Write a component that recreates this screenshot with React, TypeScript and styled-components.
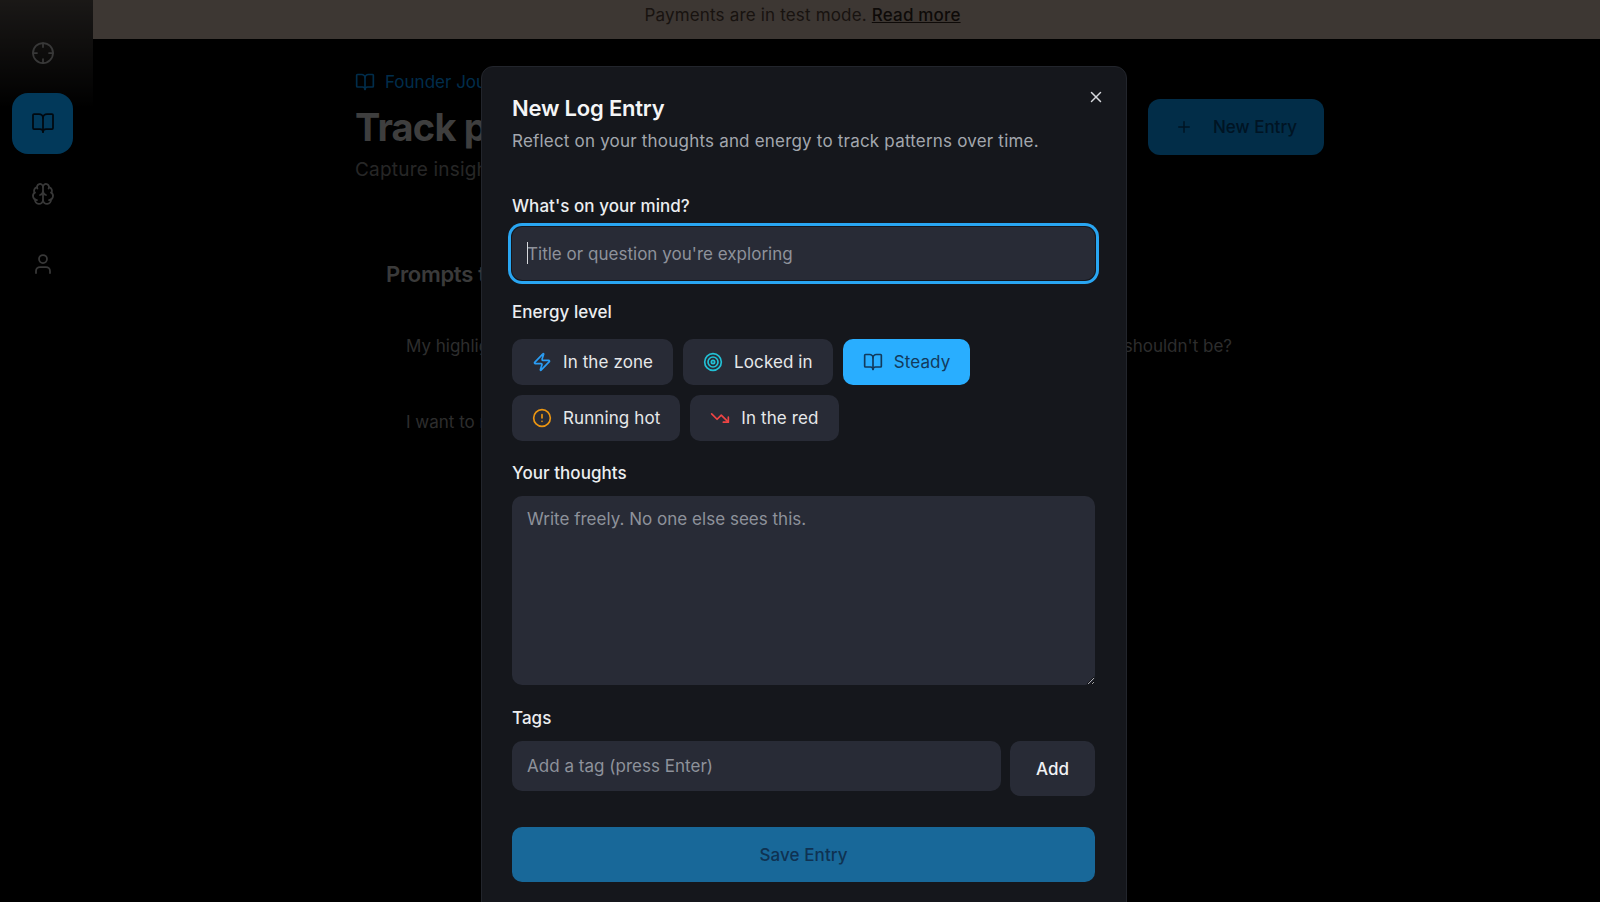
import styled, { createGlobalStyle } from "styled-components";
import {
  BookOpen,
  Brain,
  CircleAlert,
  Crosshair,
  Plus,
  Target,
  TrendingDown,
  User,
  X,
  Zap,
} from "lucide-react";

const font = `Inter, "Liberation Sans", sans-serif`;

const GlobalStyle = createGlobalStyle`
  html, body {
    margin: 0;
    height: 100%;
    background: #000;
    overflow: hidden;
    font-family: ${font};
  }
  * { box-sizing: border-box; }
`;

const Page = styled.div`
  display: flex;
  width: 1600px;
  height: 902px;
  background: #000;
  overflow: hidden;
`;
const Sidebar = styled.aside`
  width: 93px;
  flex: none;
  display: flex;
  flex-direction: column;
  padding: 22px 0 0 12px;
  gap: 9.5px;
  background: linear-gradient(#423d3a 0, #000 110px);
`;
const NavItem = styled.div<{ $active?: boolean }>`
  width: 61px;
  height: 61px;
  display: flex;
  align-items: center;
  justify-content: center;
  border-radius: 16px;
  color: ${(p) => (p.$active ? "#001526" : "#8c8c8c")};
  background: ${(p) => (p.$active ? "#058ee2" : "transparent")};
`;
const Main = styled.main`
  flex: 1;
  display: flex;
  flex-direction: column;
`;
const Banner = styled.div`
  height: 39px;
  flex: none;
  display: flex;
  align-items: center;
  justify-content: center;
  gap: 5px;
  padding: 0 88px 9px 0;
  background: #98897f;
  color: #3d3029;
  font-size: 17px;
  letter-spacing: 0.17px;
`;
const ReadMore = styled.a`
  color: #241a14;
  font-weight: 500;
  text-decoration: underline;
`;
const Content = styled.div`
  width: 969px;
  margin-left: 262px;
  padding-top: 33px;
`;
const Head = styled.header`
  display: flex;
  justify-content: space-between;
  align-items: flex-start;
`;
const Crumb = styled.div`
  display: flex;
  align-items: center;
  gap: 10px;
  color: #0070bc;
  font-size: 17px;
  line-height: 20px;
`;
const Title = styled.h1`
  margin: 12px 0 0;
  color: #9b9b9b;
  font-size: 38px;
  line-height: 46px;
  font-weight: 700;
  letter-spacing: -0.8px;
`;
const Sub = styled.p`
  margin: 7px 0 0;
  color: #606060;
  font-size: 19px;
  line-height: 26px;
  letter-spacing: 0.2px;
`;
const NewEntry = styled.button`
  width: 176px;
  height: 56px;
  margin-top: 27px;
  display: flex;
  align-items: center;
  justify-content: center;
  gap: 20px;
  border: 0;
  border-radius: 12px;
  background: #0570b4;
  color: #003258;
  font: 500 17px ${font};
`;
const Prompts = styled.section`
  margin-top: 76px;
  padding-left: 31px;
`;
const PromptsTitle = styled.h2`
  margin: 0;
  color: #919191;
  font-size: 22px;
  line-height: 30px;
  font-weight: 600;
  letter-spacing: -0.3px;
`;
const PromptGrid = styled.div`
  display: grid;
  grid-template-columns: 1fr auto;
  row-gap: 52px;
  margin-top: 45px;
  padding: 0 92px 0 20px;
  color: #717171;
  font-size: 17px;
  line-height: 24px;
`;
const Overlay = styled.div`
  position: fixed;
  inset: 0;
  background: rgba(0, 0, 0, 0.6);
`;
const Modal = styled.div`
  position: absolute;
  left: 481px;
  top: 66px;
  width: 646px;
  height: 860px;
  padding: 28px 31px 0 30px;
  border: 1px solid #22252c;
  border-radius: 12px;
  background: #15171c;
`;
const CloseButton = styled.button`
  position: absolute;
  top: 21px;
  right: 21px;
  padding: 0;
  display: flex;
  border: 0;
  background: none;
  color: #d6d8dc;
`;
const ModalTitle = styled.h2`
  margin: 0;
  color: #f4f5f6;
  font-size: 22px;
  line-height: 26px;
  font-weight: 600;
  letter-spacing: -0.2px;
`;
const ModalSub = styled.p`
  margin: 8px 0 0;
  color: #a3a7ae;
  font-size: 17px;
  line-height: 24px;
  letter-spacing: 0.2px;
`;
const Label = styled.label<{ $top: number }>`
  display: block;
  margin-top: ${(p) => p.$top}px;
  color: #eceef0;
  font-size: 17px;
  line-height: 22px;
  font-weight: 500;
  letter-spacing: 0.05px;
`;
const Field = styled.div`
  position: relative;
  margin-top: 10px;
`;
const Input = styled.input<{ $focused?: boolean }>`
  display: block;
  flex: 1;
  width: 100%;
  height: ${(p) => (p.$focused ? 53 : 50)}px;
  padding: 0 15px;
  border: 0;
  outline: 0;
  border-radius: 10px;
  background: #282b36;
  color: #eceef0;
  font: 400 17px ${font};
  letter-spacing: 0.02px;
  box-shadow: ${(p) =>
    p.$focused ? "0 0 0 1px #15171c, 0 0 0 4px #29a6f2" : "none"};
  &::placeholder {
    color: #8e929b;
    opacity: 1;
  }
`;
const Caret = styled.span`
  position: absolute;
  left: 15px;
  top: 15px;
  width: 1px;
  height: 22px;
  background: #d6d8dc;
`;
const Chips = styled.div`
  display: flex;
  flex-wrap: wrap;
  gap: 10px;
  width: 480px;
  margin-top: 16px;
`;
const Chip = styled.button<{ $active?: boolean }>`
  height: 46px;
  display: flex;
  align-items: center;
  gap: 11px;
  padding: 0 20px;
  border: 0;
  border-radius: 10px;
  background: ${(p) => (p.$active ? "#29aeff" : "#282b36")};
  color: ${(p) => (p.$active ? "#123a5c" : "#e6e8ea")};
  font: 400 17px ${font};
  letter-spacing: 0.1px;
`;
const TextArea = styled.textarea`
  display: block;
  width: 100%;
  height: 189px;
  margin-top: 12px;
  padding: 11px 15px;
  border: 0;
  outline: 0;
  border-radius: 10px;
  background: #282b36;
  color: #eceef0;
  resize: vertical;
  font: 400 17px/24px ${font};
  letter-spacing: 0.02px;
  &::placeholder {
    color: #8e929b;
    opacity: 1;
  }
`;
const TagRow = styled.div`
  display: flex;
  align-items: flex-start;
  gap: 9px;
  margin-top: 12px;
`;
const AddButton = styled.button`
  width: 85px;
  height: 55px;
  flex: none;
  border: 0;
  border-radius: 10px;
  background: #282b36;
  color: #f1f2f4;
  font: 500 17px ${font};
`;
const SaveButton = styled.button`
  display: block;
  width: 100%;
  height: 55px;
  margin-top: 31px;
  border: 0;
  border-radius: 10px;
  background: #186899;
  color: #0f3252;
  font: 500 17px ${font};
  letter-spacing: 0.1px;
`;

const navItems = [
  { id: "focus", icon: Crosshair },
  { id: "journal", icon: BookOpen, active: true },
  { id: "brain", icon: Brain },
  { id: "profile", icon: User },
];

const levels = [
  { label: "In the zone", icon: Zap, color: "#2a9df4" },
  { label: "Locked in", icon: Target, color: "#22c1d6" },
  { label: "Steady", icon: BookOpen, color: "#123a5c", active: true },
  { label: "Running hot", icon: CircleAlert, color: "#ec9612" },
  { label: "In the red", icon: TrendingDown, color: "#ef4444" },
];

const App = () => {
  return (
    <>
      <GlobalStyle />
      <Page>
        <Sidebar>
          {navItems.map((item) => (
            <NavItem key={item.id} $active={item.active}>
              <item.icon size={24} strokeWidth={1.75} />
            </NavItem>
          ))}
        </Sidebar>
        <Main>
          <Banner>
            Payments are in test mode. <ReadMore>Read more</ReadMore>
          </Banner>
          <Content>
            <Head>
              <div>
                <Crumb>
                  <BookOpen size={20} />
                  Founder Journal
                </Crumb>
                <Title>Track patterns</Title>
                <Sub>Capture insights over time</Sub>
              </div>
              <NewEntry>
                <Plus size={18} />
                New Entry
              </NewEntry>
            </Head>
            <Prompts>
              <PromptsTitle>Prompts to start with</PromptsTitle>
              <PromptGrid>
                <span>My highlight this week was</span>
                <span>What is taking more energy than it shouldn't be?</span>
                <span>I want to remember</span>
              </PromptGrid>
            </Prompts>
          </Content>
        </Main>
      </Page>
      <Overlay>
        <Modal>
          <CloseButton>
            <X size={18} />
          </CloseButton>
          <ModalTitle>New Log Entry</ModalTitle>
          <ModalSub>
            Reflect on your thoughts and energy to track patterns over time.
          </ModalSub>
          <Label $top={42}>What's on your mind?</Label>
          <Field>
            <Input $focused placeholder="Title or question you're exploring" />
            <Caret />
          </Field>
          <Label $top={21}>Energy level</Label>
          <Chips>
            {levels.map((level) => (
              <Chip key={level.label} $active={level.active}>
                <level.icon size={20} color={level.color} />
                {level.label}
              </Chip>
            ))}
          </Chips>
          <Label $top={21}>Your thoughts</Label>
          <TextArea placeholder="Write freely. No one else sees this." />
          <Label $top={22}>Tags</Label>
          <TagRow>
            <Input placeholder="Add a tag (press Enter)" />
            <AddButton>Add</AddButton>
          </TagRow>
          <SaveButton>Save Entry</SaveButton>
        </Modal>
      </Overlay>
    </>
  );
};

export default App;
